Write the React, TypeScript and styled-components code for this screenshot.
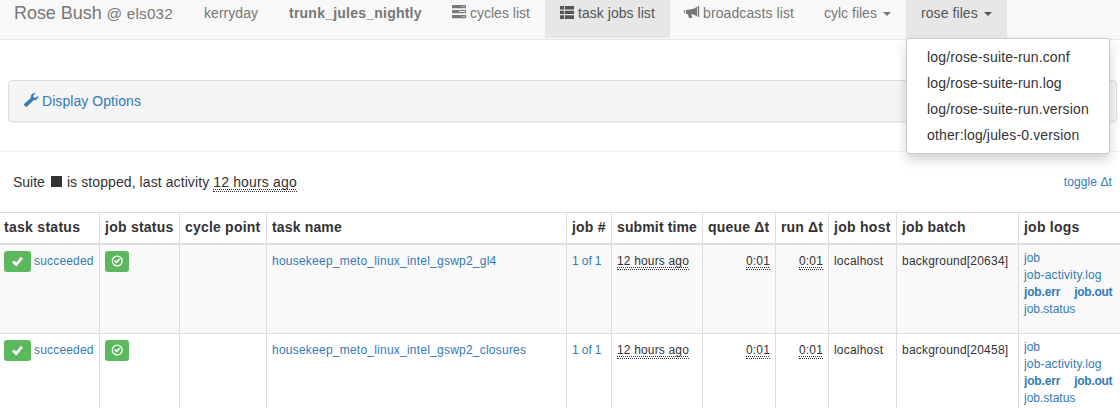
import React from "react";
import styled, { createGlobalStyle } from "styled-components";

const GlobalStyle = createGlobalStyle`
  * { box-sizing: border-box; }
  body {
    margin: 0;
    height: 408px;
    overflow: hidden;
    background: #fff;
    color: #333;
    font: 14px/20px "Liberation Sans", Arial, sans-serif;
  }
`;

const Page = styled.div`
  width: 1120px;
  height: 408px;
  overflow: hidden;
`;

const Navbar = styled.nav`
  display: flex;
  height: 40px;
  background: #f8f8f8;
  border-bottom: 1px solid #e7e7e7;
  color: #777;
`;

const Brand = styled.div`
  width: 189px;
  padding: 3px 0 0 14px;
  font-size: 18px;
  letter-spacing: -0.05px;
  white-space: nowrap;
  small { font-size: 15.3px; letter-spacing: 0.2px; }
`;

const NavItem = styled.div<{ $width: number; $active?: boolean; $bold?: boolean }>`
  position: relative;
  width: ${(p) => p.$width}px;
  height: ${(p) => (p.$active ? 38 : 39)}px;
  padding: 3px 0 0 15px;
  display: flex;
  align-items: flex-start;
  gap: 4px;
  white-space: nowrap;
  background: ${(p) => (p.$active ? "#e7e7e7" : "transparent")};
  color: ${(p) => (p.$active ? "#555" : "#777")};
  font-weight: ${(p) => (p.$bold ? 700 : 400)};
`;

const Text = styled.span<{ $spacing?: number }>`
  letter-spacing: ${(p) => p.$spacing ?? 0}px;
`;

const Glyph = styled.svg`
  width: 14px;
  height: 14px;
  margin-top: 2px;
  fill: currentColor;
  flex: none;
  overflow: visible;
`;

const Caret = styled.span`
  margin: 9px 0 0 2px;
  border: 4px solid transparent;
  border-top-color: currentColor;
  border-bottom: 0;
`;

const Menu = styled.div`
  position: absolute;
  z-index: 2;
  top: 38px;
  left: 0;
  width: 204px;
  height: 116px;
  padding: 5px 0;
  background: #fff;
  border: 1px solid #ccc;
  border-radius: 0 0 4px 4px;
  box-shadow: 0 6px 12px rgba(0, 0, 0, 0.175);
  color: #333;
`;

const MenuItem = styled.div`
  padding: 3px 20px;
  letter-spacing: 0.15px;
`;

const Panel = styled.div`
  display: flex;
  gap: 4px;
  width: 1109px;
  height: 42px;
  margin: 40px 0 0 8px;
  padding: 10px 15px;
  background: #f5f5f5;
  border: 1px solid #ddd;
  border-radius: 4px;
  box-shadow: 0 1px 1px rgba(0, 0, 0, 0.05);
  color: #337ab7;
`;

const Rule = styled.hr`
  height: 1px;
  margin: 29px 0 20px;
  border: 0;
  background: #eee;
`;

const StatusLine = styled.div`
  display: flex;
  justify-content: space-between;
  height: 40px;
  padding: 0 8px 0 13px;
`;

const Stop = styled.span`
  display: inline-block;
  width: 11px;
  height: 11px;
  margin: 0 5px 0 6px;
  background: #333;
`;

const Abbr = styled.span<{ $spacing?: number }>`
  padding-bottom: 1px;
  border-bottom: 1px dotted #333;
  text-decoration: underline dotted #333 1px;
  text-underline-offset: 2px;
  text-decoration-skip-ink: none;
  letter-spacing: ${(p) => p.$spacing ?? 0.16}px;
`;

const Link = styled.a<{ $bold?: boolean; $spacing?: number }>`
  color: #337ab7;
  font-weight: ${(p) => (p.$bold ? 700 : 400)};
  letter-spacing: ${(p) => p.$spacing ?? 0}px;
`;

const Toggle = styled(Link)`
  font-size: 12px;
  line-height: 21px;
`;

const Table = styled.table`
  width: 1121px;
  table-layout: fixed;
  border-collapse: separate;
  border-spacing: 0;
`;

const Th = styled.th<{ $spacing?: number }>`
  height: 33px;
  padding: 3px 0 6px 5px;
  border: solid #ddd;
  border-width: 1px 1px 2px 0;
  text-align: left;
  white-space: nowrap;
  letter-spacing: ${(p) => p.$spacing ?? 0}px;
  &:first-child { padding-left: 4px; }
`;

const Row = styled.tr<{ $striped?: boolean }>`
  height: 89px;
  background: ${(p) => (p.$striped ? "#f9f9f9" : "#fff")};
`;

const Td = styled.td<{ $right?: boolean }>`
  padding: 6px 5px 0;
  border: solid #ddd;
  border-width: 0 1px 1px 0;
  vertical-align: top;
  font-size: 12px;
  line-height: 20px;
  white-space: nowrap;
  text-align: ${(p) => (p.$right ? "right" : "left")};
  &:first-child { padding-left: 4px; }
`;

const StatusCell = styled.div`
  display: flex;
  gap: 3px;
`;

const Badge = styled.span<{ $width: number }>`
  display: flex;
  align-items: center;
  justify-content: center;
  width: ${(p) => p.$width}px;
  height: 21px;
  border-radius: 3px;
  background: #5cb85c;
  color: #fff;
  svg { width: 12px; height: 12px; fill: currentColor; overflow: visible; }
`;

const Logs = styled.div`
  display: flex;
  flex-direction: column;
  margin-top: -1px;
  line-height: 17px;
`;

const LogPair = styled.div`
  display: flex;
  gap: 14px;
`;

const columns: [string, number, number][] = [
  ["task status", 100, 0.28],
  ["job status", 80, 0.25],
  ["cycle point", 87, 0.2],
  ["task name", 300, 0.16],
  ["job #", 45, 0.2],
  ["submit time", 91, 0.13],
  ["queue Δt", 73, 0.2],
  ["run Δt", 53, 0.15],
  ["job host", 68, 0.28],
  ["job batch", 122, 0.17],
  ["job logs", 102, 0.23],
];

const jobs = [
  { name: "housekeep_meto_linux_intel_gswp2_gl4", batch: "background[20634]" },
  { name: "housekeep_meto_linux_intel_gswp2_closures", batch: "background[20458]" },
];

const files = [
  "log/rose-suite-run.conf",
  "log/rose-suite-run.log",
  "log/rose-suite-run.version",
  "other:log/jules-0.version",
];

const TasksIcon = () => (
  <Glyph viewBox="0 0 14 14">
    <path d="M.5 0h13l.5.5v2.200l-.5.5H.5L0 2.700V.5zM.5 5h13l.5.5v2.200l-.5.5H.5L0 7.700V5.500zM.5 10h13l.5.5v2.200l-.5.5H.5l-.5-.5v-2.200z" />
    <path fill="#f8f8f8" opacity=".7" d="M10 1.200h3v.9h-3zM9.500 11.200h3.500v.9H9.500z" />
    <path fill="#f8f8f8" d="M7 6h6v1H7z" />
  </Glyph>
);

const ListIcon = () => (
  <Glyph viewBox="0 0 14 14">
    <path d="M0 1h4.200v3.600H0zM5 1h9v3.600H5zM0 5.700h4.200v3.400H0zM5 5.700h9v3.400H5zM0 10.300h4.200V14H0zM5 10.300h9V14H5z" />
  </Glyph>
);

const BullhornIcon = () => (
  <Glyph viewBox="0 0 14 14">
    <path d="M-1 5h1v3h-1zM1 4.800h2.500C7 4.500 10 3.400 12.300 1.300v10.200C10.500 10.200 9 9.600 6.200 9.200l1 3.800H4L2.800 9H1zM13 1h1.200v11H13z" />
  </Glyph>
);

const WrenchIcon = () => (
  <Glyph viewBox="0 0 14 14">
    <path d="M11.700 0L9.200 2.400l.3 2 2.100.3L14 2.700c.3 2.800-1.600 4.800-4.600 4.500L3.400 13.300c-.6.7-1.500.7-2.100.1l-.8-.8c-.6-.6-.6-1.500.1-2.100L6.800 4.900C6.200 2 8.500-.4 11.700 0z" />
  </Glyph>
);

const CheckIcon = () => (
  <svg viewBox="0 0 12 12">
    <path d="M8.900.800l2.100 2L4.300 10.600 0 6.500l1.900-2L4.200 6.400z" />
  </svg>
);

const CheckCircleIcon = () => (
  <svg viewBox="0 0 12 12">
    <circle cx="6.200" cy="5" r="4.900" fill="none" stroke="currentColor" strokeWidth="1.300" />
    <path d="M8 2.600l1.300 1.200-3.700 3.800L3.100 5.300l1.200-1.200 1.300 1z" />
  </svg>
);

export default function App() {
  return (
    <Page>
      <GlobalStyle />
      <Navbar>
        <Brand>Rose Bush <small>@ els032</small></Brand>
        <NavItem $width={85}><Text $spacing={0.05}>kerryday</Text></NavItem>
        <NavItem $width={163} $bold><Text $spacing={0.23}>trunk_jules_nightly</Text></NavItem>
        <NavItem $width={108}><TasksIcon /><Text>cycles list</Text></NavItem>
        <NavItem $width={125} $active><ListIcon /><Text $spacing={0.04}>task jobs list</Text></NavItem>
        <NavItem $width={139}><BullhornIcon /><Text $spacing={0.1}>broadcasts list</Text></NavItem>
        <NavItem $width={97}><Text>cylc files</Text><Caret /></NavItem>
        <NavItem $width={101} $active>
          <Text $spacing={0.08}>rose files</Text><Caret />
          <Menu>
            {files.map((f) => <MenuItem key={f}>{f}</MenuItem>)}
          </Menu>
        </NavItem>
      </Navbar>
      <Panel><WrenchIcon /><Text $spacing={0.06}>Display Options</Text></Panel>
      <Rule />
      <StatusLine>
        <div>
          Suite<Stop /><Text $spacing={0.09}>is stopped, last activity </Text><Abbr $spacing={0.16}>12 hours ago</Abbr>
        </div>
        <Toggle $spacing={0.1}>toggle Δt</Toggle>
      </StatusLine>
      <Table>
        <colgroup>
          {columns.map(([label, width]) => <col key={label} width={width} />)}
        </colgroup>
        <thead>
          <tr>
            {columns.map(([label, , spacing]) => <Th key={label} $spacing={spacing}>{label}</Th>)}
          </tr>
        </thead>
        <tbody>
          {jobs.map((job, i) => (
            <Row key={job.name} $striped={i === 0}>
              <Td><StatusCell><Badge $width={27}><CheckIcon /></Badge><Link $spacing={0.18}>succeeded</Link></StatusCell></Td>
              <Td><Badge $width={24}><CheckCircleIcon /></Badge></Td>
              <Td />
              <Td><Link $spacing={0.23}>{job.name}</Link></Td>
              <Td><Link $spacing={-0.1}>1 of 1</Link></Td>
              <Td><Abbr>12 hours ago</Abbr></Td>
              <Td $right><Abbr>0:01</Abbr></Td>
              <Td $right><Abbr>0:01</Abbr></Td>
              <Td><Text $spacing={0.2}>localhost</Text></Td>
              <Td><Text $spacing={0.21}>{job.batch}</Text></Td>
              <Td>
                <Logs>
                  <Link>job</Link>
                  <Link $spacing={0.16}>job-activity.log</Link>
                  <LogPair><Link $bold $spacing={-0.15}>job.err</Link><Link $bold $spacing={-0.3}>job.out</Link></LogPair>
                  <Link>job.status</Link>
                </Logs>
              </Td>
            </Row>
          ))}
        </tbody>
      </Table>
    </Page>
  );
}
